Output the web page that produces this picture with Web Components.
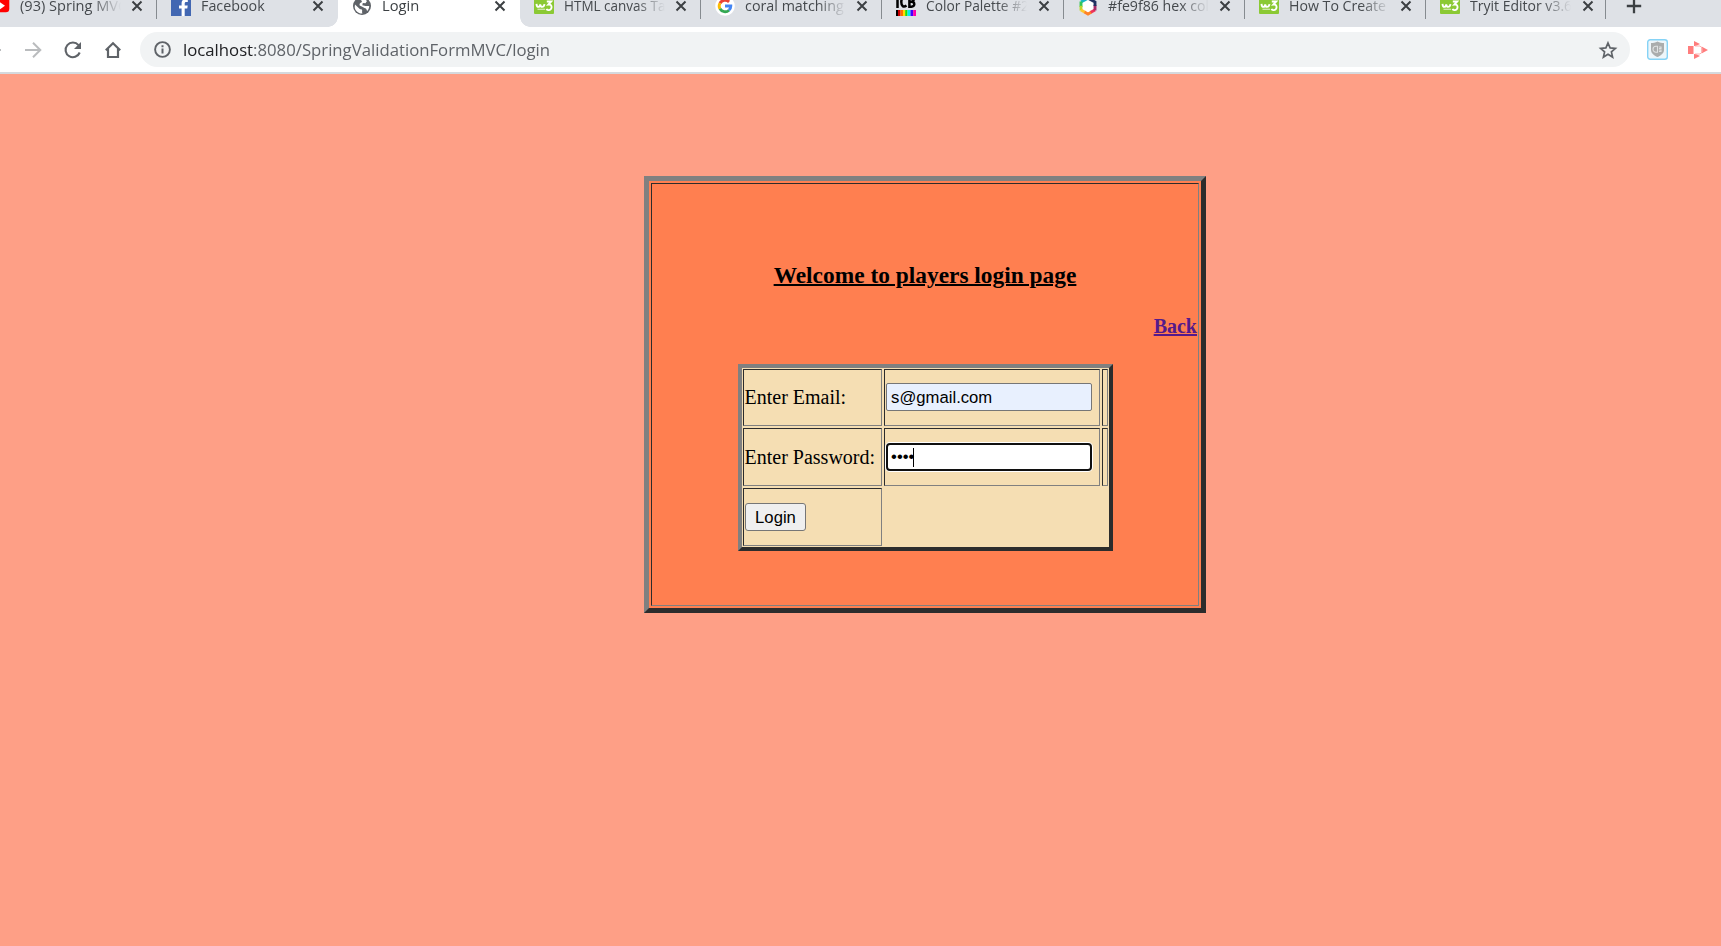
<!DOCTYPE html>
<html lang="en">
<head>
<meta charset="utf-8">
<title>Login</title>
<style>
html,body{margin:0;height:100%;overflow:hidden;background:#fe9f86}
</style>
</head>
<body>
<browser-window></browser-window>
<script>
const make=(name,html,setup)=>customElements.define(name,class extends HTMLElement{
  constructor(){super();this.attachShadow({mode:'open'}).innerHTML=html;}
  connectedCallback(){if(setup)setup.call(this,this.shadowRoot);}
});

/* One line of text, condensed or widened to the given advance width. */
make('fit-text',`<style>:host{display:block;white-space:pre}span{display:inline-block;transform-origin:0 50%}:host([underline]) span{text-decoration:underline;text-decoration-thickness:2px}</style><span><slot></slot></span>`,
function(r){
  const s=r.querySelector('span'),w=+this.getAttribute('width');
  if(w)s.style.transform='scaleX('+(w/s.offsetWidth)+')';
});

const icons={
youtube:`<rect x="-8" y=".7" width="27.300" height="15.600" rx="3.500" fill="#f00"/><path d="M9 5.500l6 4.200-6 4.200z" fill="#fff"/>`,
facebook:`<path d="M0 0h20v20H0z" fill="#4267b2"/><path d="M13.700 20v-7.600h2.600l.4-3h-3V7.500c0-.9.3-1.500 1.600-1.500h1.500V3.300c-.3 0-1.200-.1-2.300-.1-2.300 0-3.900 1.400-3.900 4v2.200H8v3h2.600V20z" fill="#fff"/>`,
globe:`<circle cx="10" cy="10" r="9" fill="#5f6368"/><path d="M3 8.500l4.500 4.300c1 .8 2.300.2 2.600 1.300.2 1.400-.4 2.100.4 3.300-4 .4-7.700-3-7.800-6.500zM8 3.500c2.500-1 5-.5 7 1.400l-1.500 2.400-2.700-.3-.5 2.200 3.300.8 3.600-.1c0 2-.7 3.900-2 5.200-.7-1.400-.6-2.700-2.200-2.900l-3.200-1.600-2.100-1.100c-.5-1.600.3-2.600 1.700-2.900L10 5z" fill="#fff"/>`,
w3:`<g transform="translate(0 4)"><rect y="-5" width="20" height="19" rx="1" fill="#8bc934"/><path d="M2.500 3.800c.2 2.500.7 3.100 1.800 3.100S6 6.100 6.200 4.300c.2 1.800.8 2.600 2 2.600s1.900-.8 2.300-2.800M12.800 1.500h4.400L14.500 4.500c4.300-.7 3.900 6.300-.2 5.600-1-.2-1.500-.6-1.800-1.300" fill="none" stroke="#fff" stroke-width="1.900"/><path d="M3.500 9.300H11" stroke="#fff" stroke-width="1.300" opacity=".6"/></g>`,
google:`<circle cx="10" cy="10" r="9.800" fill="#fff"/><g fill="none" stroke-width="2.900"><path d="M5 7.200A5.800 5.800 0 0 1 14.100 5.900" stroke="#ea4335"/><path d="M5 12.900A5.800 5.800 0 0 1 5 7.100" stroke="#fbbc05"/><path d="M14 14.200A5.800 5.800 0 0 1 5 12.800" stroke="#34a853"/><path d="M10 10h5.800a5.800 5.800 0 0 1-1.900 4.300" stroke="#4285f4"/></g>`,
icb:`<g transform="translate(0 4)"><g fill="none" stroke="#000" stroke-width="2.500"><path d="M1.500 -5V8M10.500 5.600C7.200 8 5.300 5.500 5.300 2S7 -3.500 10.500 -2M13.400 -4V6.700h2c4 0 3.700-5 0-5h-2M15.200 1.700c3.300 0 3.300-4.700 0-4.700"/></g><path d="M0 10h2v6H0z"/><path d="M2 10h2.500v6H2z" fill="#c00"/><path d="M4.500 10H7v6H4.500z" fill="#ff6a00"/><path d="M7 10h2.200v6H7z" fill="#fd0"/><path d="M9.200 10h2.300v6H9.200z" fill="#2d0"/><path d="M11.500 10h3v6h-3z" fill="#0ee"/><path d="M14.500 10h2.700v6h-2.700z" fill="#40f"/><path d="M17.200 10H20v6h-2.800z" fill="#f0a"/></g>`,
hex:`<path d="M10 1l8 4.500v9L10 19l-8-4.500v-9z" fill="#fff"/><g fill="none" stroke-width="2.900"><path d="M10 2.200L3 6" stroke="#14b6c6"/><path d="M3 5.500v5.500" stroke="#32c65c"/><path d="M3 9.800v4.800" stroke="#bad62d"/><path d="M3 14l4 2.300" stroke="#ffc52d"/><path d="M6.500 16l3.500 2 3.500-2" stroke="#ff8227"/><path d="M12.800 16.300L17 14" stroke="#ef355a"/><path d="M17 14.500V9" stroke="#a52a68"/><path d="M17 10V6l-7-3.800" stroke="#203162"/></g>`
};

make('browser-tab',`<style>
:host{display:flex;box-sizing:border-box;flex:none;width:181.350px;height:42px;padding-left:14px;align-items:center;position:relative;font:14.300px "Open Sans","Noto Sans",sans-serif;color:#45494d}
:host([sep])::after{content:"";position:absolute;right:0;top:15px;width:1px;height:19px;background:#868b90}
:host([active]) {color:#3c4043}
.ico{width:20px;height:20px;overflow:visible;flex:none}
.t{width:101px;flex:none;margin-left:10px;overflow:hidden;line-height:22px;margin-top:-1px;-webkit-mask:linear-gradient(90deg,#000 72px,transparent 101px)}
.x{width:12px;height:12px;flex:none;margin-left:10.300px}
</style><svg class="ico" viewBox="0 0 20 20"></svg><div class="t"><slot></slot></div><svg class="x" viewBox="0 0 12 12"><path d="M1.500 1.500l9 9m0-9l-9 9" stroke="#3c4043" stroke-width="2"/></svg>`,
function(r){r.querySelector('.ico').innerHTML=icons[this.getAttribute('icon')];
 if(this.hasAttribute('active'))r.querySelector('.t').style.webkitMask='none';});

make('tab-strip',`<style>
:host{display:flex;height:27px;background:#dee1e6;overflow:hidden}
.row{display:flex;margin:-15px 0 0 -24.300px;height:42px;align-items:center}
.bg{position:relative;background:#fff}
.bg::before{content:"";position:absolute;bottom:0;left:-10px;width:10px;height:10px;background:radial-gradient(circle at 0 0,transparent 9.500px,#fff 10px)}
.cap{position:absolute;right:-10px;bottom:0;width:10px;height:10px;background:radial-gradient(circle at 100% 0,transparent 9.500px,#fff 10px)}
.plus{width:16px;height:16px;margin-left:20px}
</style><div class="row">
<browser-tab sep icon="youtube"><fit-text width="107">(93) Spring MVC</fit-text></browser-tab>
<browser-tab icon="facebook"><fit-text width="64">Facebook</fit-text></browser-tab>
<div class="bg"><browser-tab active icon="globe"><fit-text width="37">Login</fit-text></browser-tab><i class="cap"></i></div>
<browser-tab sep icon="w3"><fit-text width="101">HTML canvas Ta</fit-text></browser-tab>
<browser-tab sep icon="google"><fit-text width="99">coral matching</fit-text></browser-tab>
<browser-tab sep icon="icb"><fit-text width="103">Color Palette #2</fit-text></browser-tab>
<browser-tab sep icon="hex"><fit-text width="101">#fe9f86 hex col</fit-text></browser-tab>
<browser-tab sep icon="w3"><fit-text width="97">How To Create</fit-text></browser-tab>
<browser-tab sep icon="w3" style="width:179.500px"><fit-text width="102">Tryit Editor v3.6</fit-text></browser-tab>
<svg class="plus" viewBox="0 0 16 16"><path d="M8 .8v14.400M.8 8h14.400" stroke="#3c4043" stroke-width="2.300"/></svg>
</div>`);

make('tool-bar',`<style>
:host{display:flex;height:45px;background:#fff;border-bottom:2px solid #d5d9dd;align-items:center;overflow:hidden}
svg{flex:none;overflow:visible}
.nav{display:flex;width:140px;height:45px;align-items:center}
.pill{display:flex;box-sizing:border-box;width:1490px;height:35px;border-radius:18px;background:#f1f3f4;align-items:center;padding:0 13px 0 14px;justify-content:space-between}
.addr{display:flex;align-items:center;gap:12px;font:17.200px/30px "Open Sans","Noto Sans",sans-serif;color:#5f6368}
b{font-weight:400;color:#202124}
.ext{display:flex;margin-left:17px;gap:20px;align-items:center}
</style>
<div class="nav">
<svg width="1" height="2" viewBox="0 0 1 2"><path d="M0 0h1v2H0z" fill="#babcbe"/></svg>
<svg style="margin-left:24px" width="17" height="16" viewBox="0 0 17 16"><path d="M0 8h15M8 .8L15.300 8 8 15.200" fill="none" stroke="#babcbe" stroke-width="2"/></svg>
<svg style="margin-left:22px" width="18" height="18" viewBox="0 0 18 18"><path d="M15.700 11.500A7.300 7.300 0 1 1 14.500 4.200" fill="none" stroke="#5f6368" stroke-width="2.100"/><path d="M17 1v7h-7z" fill="#5f6368"/></svg>
<svg style="margin-left:21.500px" width="18" height="18" viewBox="0 0 18 18"><path d="M1.800 9.200L9 2.200l7.200 7M4 7.500V16h10V7.500" fill="none" stroke="#5f6368" stroke-width="2.200"/></svg>
</div>
<div class="pill"><div class="addr">
<svg width="17" height="17" viewBox="0 0 17 17"><circle cx="8.500" cy="8.500" r="7.400" fill="none" stroke="#5f6368" stroke-width="1.900"/><path d="M8.500 7.500v5M8.500 4.200v2" stroke="#5f6368" stroke-width="2"/></svg>
<fit-text width="367"><b>localhost</b>:8080/SpringValidationFormMVC/login</fit-text></div>
<svg width="18" height="18" viewBox="0 0 18 18"><path d="M9 2l2.100 4.900 5.300.5-4 3.500 1.200 5.200L9 13.300l-4.600 2.800 1.200-5.200-4-3.500 5.300-.5z" fill="none" stroke="#5f6368" stroke-width="1.700"/></svg></div>
<div class="ext">
<svg width="21" height="21" viewBox="0 0 21 21"><rect x=".7" y=".7" width="19.600" height="19.600" rx="2.500" fill="#eef6fa" stroke="#86d3f6" stroke-width="1.400"/><path d="M10.500 2.500c2 1.300 4.500 1.500 6.500 1.500v7c0 3-3 5.500-6.500 7C7 16.500 4 14 4 11V4c2 0 4.500-.2 6.500-1.500z" fill="#aaadad"/><path d="M10.500 7.200H9a3 3 0 0 0 0 6h1.500zM12 8h2v1.500h-2M12 11h2v1.500h-2" fill="none" stroke="#dfe2e2" stroke-width="1.100"/></svg>
<svg width="20" height="18" viewBox="0 0 20 18"><path d="M0 5h5.500v8H0zM6 0l6 3-4 2H6zM6 18l6-3-4-2H6zM13.500 5.500L20 9l-6.500 3.500z" fill="#ff7d7d"/><path d="M7 5h5l2 2v4l-2 2H7" fill="none" stroke="#ffb0b0" stroke-width="1"/></svg>
</div>`);

make('table-cell',`<style>:host{display:flex;box-sizing:border-box;align-items:center;padding:0 1px;border:1px solid;border-color:#2c2c2c #808080 #808080 #2c2c2c}</style><slot></slot>`);

make('text-field',`<style>
:host{display:flex;box-sizing:border-box;width:206px;height:28px;margin-top:-1px;align-items:center;padding-left:4px;border:1px solid #767676;border-radius:2px;background:#e8f0fe;font:16.667px "Liberation Sans",Arial,sans-serif;color:#000}
span{margin-left:.6px;padding-top:1px}
:host([focused]){background:#fff;border:2px solid #101010;border-radius:4px;padding-left:3px;box-shadow:0 0 0 1px #fff;margin-top:0}
:host([focused]) span{margin:0 -1.500px 0 .6px;padding-top:0}
i{display:none;width:1px;height:19px;background:#000}
:host([focused]) i{display:block}
</style><span><slot></slot></span><i></i>`);

make('push-button',`<style>:host{display:flex;box-sizing:border-box;width:61px;height:28px;padding:1px 0 0 1px;align-items:center;justify-content:center;border:1px solid #767676;border-radius:3px;background:#efefef;font:16.667px "Liberation Sans",Arial,sans-serif;color:#000}</style><slot></slot>`);

make('login-form',`<style>
:host{display:grid;box-sizing:border-box;grid-template:57px 58px 58px/139px 216px 6px;gap:2px;padding:1px;border:4px solid;border-color:#808080 #2c2c2c #2c2c2c #808080;background:#f5deb3;font:20px "Liberation Serif","Times New Roman",serif;color:#000}
table-cell{white-space:nowrap}
</style>
<table-cell><fit-text width="102">Enter Email:</fit-text></table-cell><table-cell><text-field>s@gmail.com</text-field></table-cell><table-cell></table-cell>
<table-cell><fit-text width="131">Enter Password:</fit-text></table-cell><table-cell><text-field focused>••••</text-field></table-cell><table-cell></table-cell>
<table-cell><push-button>Login</push-button></table-cell>`);

make('login-panel',`<style>
:host{display:block;box-sizing:border-box;width:562px;height:437px;padding:2px;border:5px solid;border-color:#808080 #2c2c2c #2c2c2c #808080;background:#ff7f50;font-family:"Liberation Serif","Times New Roman",serif;font-weight:700}
.c{display:flex;flex-direction:column;box-sizing:border-box;height:100%;align-items:center;padding:78px 1px 0;border:1px solid;border-color:#2c2c2c #808080 #808080 #2c2c2c}
.h{font-size:23.400px;line-height:27px;color:#000}
.a{align-self:flex-end;margin-top:26px;font-size:20px;line-height:23px;color:#551a8b;text-decoration:underline;text-decoration-thickness:2px}
login-form{margin-top:26px}
</style><div class="c"><fit-text class="h" underline width="303">Welcome to players login page</fit-text><a class="a">Back</a><login-form></login-form></div>`);

make('browser-window',`<style>
:host{display:block;width:1721px;height:946px;overflow:hidden;background:#fe9f86}
login-panel{margin:102px 0 0 644px}
</style><tab-strip></tab-strip><tool-bar></tool-bar><login-panel></login-panel>`);
</script>
</body>
</html>
